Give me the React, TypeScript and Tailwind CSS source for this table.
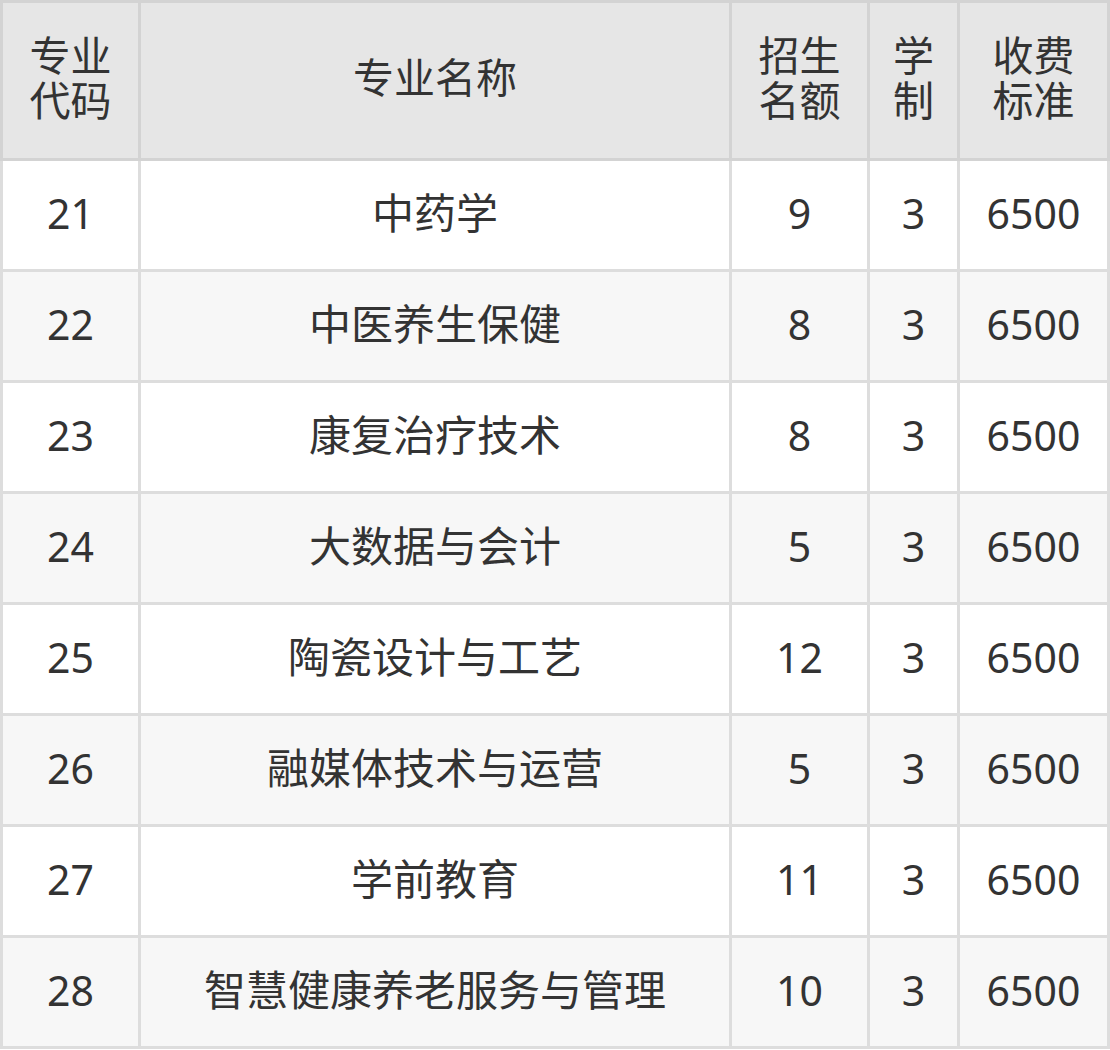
const rows = [
  { code: '21', name: '中药学', quota: '9', years: '3', fee: '6500' },
  { code: '22', name: '中医养生保健', quota: '8', years: '3', fee: '6500' },
  { code: '23', name: '康复治疗技术', quota: '8', years: '3', fee: '6500' },
  { code: '24', name: '大数据与会计', quota: '5', years: '3', fee: '6500' },
  { code: '25', name: '陶瓷设计与工艺', quota: '12', years: '3', fee: '6500' },
  { code: '26', name: '融媒体技术与运营', quota: '5', years: '3', fee: '6500' },
  { code: '27', name: '学前教育', quota: '11', years: '3', fee: '6500' },
  { code: '28', name: '智慧健康养老服务与管理', quota: '10', years: '3', fee: '6500' },
]

const cols = 'grid grid-cols-[135px_588px_135px_87px_147px] gap-[3px]'

export default function App() {
  return (
    <div
      className="w-[1110px] bg-white text-[#333333] text-[41px]"
      style={{ fontFamily: '"Noto Sans", "Noto Sans CJK SC", sans-serif' }}
    >
      <div className={`${cols} bg-[#d3d3d3] p-[3px] h-[161px]`}>
        {[
          ['专业', '代码'],
          ['专业名称'],
          ['招生', '名额'],
          ['学', '制'],
          ['收费', '标准'],
        ].map((lines, i) => (
          <div key={i} className="bg-[#e6e6e6] flex flex-col items-center justify-center leading-[45px] pb-[6px]">
            {lines.map((l) => (
              <span key={l}>{l}</span>
            ))}
          </div>
        ))}
      </div>
      <div className="flex flex-col gap-[3px] bg-[#dddddd] px-[3px] pb-[3px]">
        {rows.map((r, i) => (
          <div key={r.code} className={`${cols} h-[108px]`}>
            {[r.code, r.name, r.quota, r.years, r.fee].map((v, j) => (
              <div
                key={j}
                className={`${i % 2 === 0 ? 'bg-white' : 'bg-[#f7f7f7]'} ${j === 1 ? 'text-[42px]' : ''} flex items-center justify-center leading-none pb-[4px]`}
              >
                {v}
              </div>
            ))}
          </div>
        ))}
      </div>
    </div>
  )
}
